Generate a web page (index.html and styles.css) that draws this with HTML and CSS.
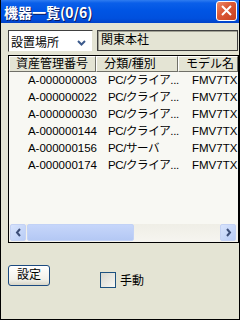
FILE: index.html
```html
<!DOCTYPE html>
<html lang="ja">
<head>
  <meta charset="UTF-8">
  <title>機器一覧</title>
  <link rel="stylesheet" href="styles.css">
</head>
<body>

<div class="window">
  <div class="titlebar">
    <span class="title">機器一覧(0/6)</span>
    <div class="close">
      <svg width="11" height="11" viewBox="0 0 11 11"><path d="M1 1L10 10M10 1L1 10" stroke="#fff" stroke-width="2"/></svg>
    </div>
  </div>

  <div class="content">
    <div class="filter">
      <div class="select">
        <span>設置場所</span>
        <svg class="chev" width="9" height="6" viewBox="0 0 9 6"><path d="M1 1L4.5 4.5L8 1" stroke="#3c5a8c" stroke-width="2" fill="none"/></svg>
      </div>
      <div class="field">関東本社</div>
    </div>

    <div class="list">
      <div class="list-head">
        <div class="hcell c1">資産管理番号</div>
        <div class="hcell c2">分類/種別</div>
        <div class="hcell c3">モデル名</div>
      </div>
      <div class="rows">
        <div class="row"><span class="c1">A-000000003</span><span class="c2">PC/クライア...</span><span class="c3">FMV7TX</span></div>
        <div class="row"><span class="c1">A-000000022</span><span class="c2">PC/クライア...</span><span class="c3">FMV7TX</span></div>
        <div class="row"><span class="c1">A-000000030</span><span class="c2">PC/クライア...</span><span class="c3">FMV7TX</span></div>
        <div class="row"><span class="c1">A-000000144</span><span class="c2">PC/クライア...</span><span class="c3">FMV7TX</span></div>
        <div class="row"><span class="c1">A-000000156</span><span class="c2">PC/サーバ</span><span class="c3">FMV7TX</span></div>
        <div class="row"><span class="c1">A-000000174</span><span class="c2">PC/クライア...</span><span class="c3">FMV7TX</span></div>
      </div>
      <div class="hscroll">
        <div class="sbtn">
          <svg width="7" height="9" viewBox="0 0 7 9"><path d="M5 1L2 4.5L5 8" stroke="#3c4e78" stroke-width="2" fill="none"/></svg>
        </div>
        <div class="track">
          <div class="thumb"></div>
        </div>
        <div class="sbtn">
          <svg width="7" height="9" viewBox="0 0 7 9"><path d="M2 1L5 4.5L2 8" stroke="#3c4e78" stroke-width="2" fill="none"/></svg>
        </div>
      </div>
    </div>

    <div class="footer">
      <div class="btn">設定</div>
      <label class="check"><span class="box"></span>手動</label>
    </div>
  </div>
</div>

</body>
</html>
```

FILE: styles.css
```css
body {
  margin: 0;
  font-family: "Liberation Sans", "Noto Sans CJK JP", sans-serif;
  font-size: 12px;
  color: #000;
}
.window {
  width: 240px;
  height: 320px;
  box-sizing: border-box;
  background: #e4e4d4;
  border: 1px solid #000;
  border-top: none;
  overflow: hidden;
}
.titlebar {
  height: 23px;
  margin: 0 -1px;
  display: flex;
  align-items: center;
  justify-content: space-between;
  padding: 0 3px 0 4px;
  background: linear-gradient(#2f7cf0 0, #0a5fe9 3px, #0055e4 45%, #0050de 80%, #0042c8 100%);
}
.title {
  font-family: "Noto Sans CJK JP", sans-serif;
  font-weight: bold;
  font-size: 14px;
  color: #fff;
  text-shadow: 1px 1px 0 #0a1a60;
  line-height: 1;
}
.close {
  width: 19px;
  height: 18px;
  border: 1px solid #fff;
  border-radius: 3px;
  background: linear-gradient(135deg, #ec8a6a 0, #dc5a38 40%, #c8401e 100%);
  display: flex;
  align-items: center;
  justify-content: center;
  margin-top: -2px;
}
.content {
  padding: 7px 0 0 7px;
}
.filter {
  display: flex;
  gap: 4px;
  align-items: flex-start;
}
.select {
  width: 85px;
  height: 22px;
  box-sizing: border-box;
  background: #fff;
  border: 1px solid;
  border-color: #404040 #e4e4d4 #e4e4d4 #404040;
  display: flex;
  align-items: center;
  justify-content: space-between;
  padding: 0 6px 0 2px;
}
.chev {
  margin-top: 3px;
}
.field {
  flex: 1;
  height: 21px;
  box-sizing: border-box;
  border: 1px solid #404040;
  box-shadow: inset 1px 1px 0 #a0a094;
  padding: 0 3px;
  line-height: 19px;
  margin-right: 1px;
}
.list {
  margin-top: 3px;
  width: 231px;
  height: 188px;
  box-sizing: border-box;
  border: 1px solid #000;
  display: flex;
  flex-direction: column;
  background: #f8f8f3;
  overflow: hidden;
}
.list-head {
  display: flex;
  height: 16px;
  flex: none;
  white-space: nowrap;
}
.hcell {
  box-sizing: border-box;
  background: #e4e4d4;
  border: 1px solid;
  border-color: #fff #707068 #707068 #fff;
  line-height: 14px;
  overflow: hidden;
}
.hcell.c1 { width: 91px; padding-left: 6px; }
.hcell.c2 { width: 85px; padding-left: 7px; }
.hcell.c3 { width: 60px; padding-left: 7px; flex: none; }
.rows {
  flex: 1;
}
.row {
  display: flex;
  height: 17px;
  line-height: 17px;
  white-space: nowrap;
}
.row .c1 {
  width: 91px;
  box-sizing: border-box;
  text-align: right;
  padding-right: 3px;
  font-size: 11.5px;
}
.row .c2 {
  width: 85px;
  box-sizing: border-box;
  padding-left: 8px;
  font-size: 11.5px;
  letter-spacing: -0.4px;
}
.row .c3 {
  padding-left: 7px;
  font-size: 11.5px;
}
.hscroll {
  height: 18px;
  flex: none;
  display: flex;
  padding: 0 2px 0 1px;
  background: #f3f2ec;
}
.sbtn {
  width: 16px;
  height: 17px;
  box-sizing: border-box;
  border: 1px solid #c4d2f4;
  border-radius: 2px;
  background: linear-gradient(135deg, #d8e4fc, #b8ccf6);
  display: flex;
  align-items: center;
  justify-content: center;
}
.track {
  flex: 1;
  padding: 0 1px;
  background: linear-gradient(#efeee6, #f6f5f0);
}
.thumb {
  width: 107px;
  height: 17px;
  box-sizing: border-box;
  border: 1px solid #c2d2f6;
  border-radius: 2px;
  background: linear-gradient(#c6d6fa, #b4c8f4);
}
.footer {
  display: flex;
  align-items: flex-start;
  margin-top: 22px;
}
.btn {
  width: 42px;
  height: 21px;
  box-sizing: border-box;
  border: 1px solid #1c4a80;
  border-radius: 3px;
  background: linear-gradient(#ffffff, #f2f1ea 70%, #d8d6c8);
  text-align: center;
  line-height: 19px;
}
.check {
  display: flex;
  align-items: center;
  gap: 4px;
  margin: 6px 0 0 50px;
}
.box {
  width: 16px;
  height: 16px;
  box-sizing: border-box;
  border: 1px solid #1c5180;
  background: linear-gradient(135deg, #d6d6ce, #f8f8f4);
}
```
